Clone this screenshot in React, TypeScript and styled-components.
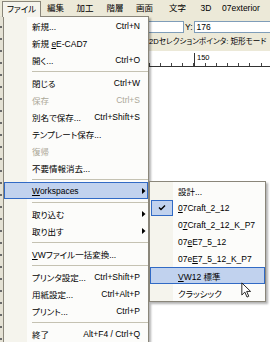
import React from 'react';
import styled, { createGlobalStyle, css } from 'styled-components';

const GlobalStyle = createGlobalStyle`
  html, body { margin: 0; padding: 0; background: #fff; }
  body {
    font-family: "Liberation Sans", "Noto Sans CJK JP", sans-serif;
    font-size: 8.5px;
    font-feature-settings: "palt";
    color: #000;
  }
`;

const Screen = styled.div`
  position: relative;
  width: 270px;
  height: 342px;
  overflow: hidden;
  background: #fff;
  display: flex;
  flex-direction: column;
`;

const MenuBar = styled.div`
  display: flex;
  flex-shrink: 0;
  height: 16px;
  padding-left: 2px;
  background: #ece9d8;
`;

const MenuTitle = styled.div<{ $w: number; $open?: boolean }>`
  box-sizing: border-box;
  width: ${p => p.$w}px;
  height: 16px;
  line-height: 16px;
  text-align: center;
  white-space: nowrap;
  ${p => p.$open && css`
    position: relative;
    z-index: 3;
    margin-top: 1px;
    line-height: 14px;
    background: #f5f4ed;
    border: 1px solid #8a867a;
    border-bottom: none;
  `}
`;

const Body = styled.div`
  display: flex;
  flex: 1;
  min-height: 0;
`;

const Dock = styled.div`
  width: 3px;
  background-color: #e4e1d4;
  background-image: repeating-linear-gradient(to bottom, transparent 0 10px, #6b6b6b 10px 12px);
  background-size: 2px 100%;
  background-repeat: no-repeat;
`;

const Work = styled.div`
  flex: 1;
  display: flex;
  flex-direction: column;
  min-width: 0;
`;

const Toolbar = styled.div`
  background: #ece9d8;
  padding-top: 4px;
`;

const CoordRow = styled.div`
  display: flex;
  align-items: center;
  height: 13px;
  padding-left: 131px;
`;

const Field = styled.div<{ $w?: number }>`
  box-sizing: border-box;
  height: 12px;
  ${p => (p.$w ? `width: ${p.$w}px;` : 'flex: 1;')}
  background: #fff;
  border: 1px solid #7f9db9;
  border-right: ${p => (p.$w ? '1px solid #7f9db9' : 'none')};
  padding-left: 2px;
  line-height: 10px;
`;

const FieldLabel = styled.span`
  margin: 0 1px;
`;

const ModeRow = styled.div`
  height: 18px;
  line-height: 18px;
  padding-left: 146px;
  font-size: 7.6px;
  white-space: nowrap;
`;

const Ruler = styled.div`
  display: flex;
  align-items: flex-end;
  height: 15px;
  border-bottom: 1px solid #333;
  background-image: repeating-linear-gradient(to right, #444 0 1px, transparent 1px 11.2px);
  background-size: 100% 3px;
  background-position: 0 100%;
  background-repeat: no-repeat;
`;

const RulerMark = styled.div`
  margin-left: 191px;
  height: 13px;
  border-left: 1px solid #333;
  padding-left: 2px;
  font-size: 7.5px;
  line-height: 9px;
`;

const Canvas = styled.div`
  flex: 1;
  background: #fff;
`;

const Menu = styled.div<{ $left: number; $top: number; $w: number; $z: number }>`
  position: absolute;
  left: ${p => p.$left}px;
  top: ${p => p.$top}px;
  width: ${p => p.$w}px;
  z-index: ${p => p.$z};
  box-sizing: border-box;
  border: 1px solid #8a867a;
  background: linear-gradient(to right, #f5f4ed 0 23px, #fcfcfa 23px);
  box-shadow: 2px 2px 2px rgba(0, 0, 0, 0.3);
`;

const Item = styled.div<{ $hot?: boolean; $off?: boolean }>`
  display: flex;
  align-items: center;
  height: 17px;
  padding-right: 8px;
  white-space: nowrap;
  color: ${p => (p.$off ? '#aca899' : '#000')};
  ${p => p.$hot && css`
    background: #c1d2ee;
    box-shadow: inset 0 0 0 1px #316ac5;
  `}
`;

const IconCell = styled.div`
  display: flex;
  align-items: center;
  justify-content: center;
  width: 23px;
  height: 17px;
  flex-shrink: 0;
`;

const CheckBox = styled.div`
  box-sizing: border-box;
  display: flex;
  align-items: center;
  justify-content: center;
  width: 22px;
  height: 16px;
  background: #c1d2ee;
  border: 1px solid #316ac5;
`;

const Label = styled.span`
  flex: 1;
  padding-left: 5px;
`;

const Shortcut = styled.span`
  padding-left: 3px;
`;

const Arrow = styled.svg`
  width: 4px;
  height: 6px;
  margin-right: -6px;
`;

const Separator = styled.div`
  display: flex;
  align-items: center;
  height: 6px;
  padding-left: 28px;
  &::after {
    content: '';
    flex: 1;
    height: 1px;
    background: #c5c2b2;
  }
`;

const Cursor = styled.svg`
  position: absolute;
  left: 241px;
  top: 282px;
  z-index: 5;
`;

type Entry =
  | 'sep'
  | { label: React.ReactNode; key?: string; off?: boolean; sub?: boolean; hot?: boolean };

const fileMenu: Entry[] = [
  { label: '新規...', key: 'Ctrl+N' },
  { label: <>新規 <u>e</u>E-CAD7</> },
  { label: '開く...', key: 'Ctrl+O' },
  'sep',
  { label: '閉じる', key: 'Ctrl+W' },
  { label: '保存', key: 'Ctrl+S', off: true },
  { label: '別名で保存...', key: 'Ctrl+Shift+S' },
  { label: 'テンプレート保存...' },
  { label: '復帰', off: true },
  { label: '不要情報消去...' },
  'sep',
  { label: <><u>W</u>orkspaces</>, sub: true, hot: true },
  'sep',
  { label: '取り込む', sub: true },
  { label: '取り出す', sub: true },
  'sep',
  { label: <><u>V</u>Wファイル一括変換...</> },
  'sep',
  { label: 'プリンタ設定...', key: 'Ctrl+Shift+P' },
  { label: '用紙設定...', key: 'Ctrl+Alt+P' },
  { label: 'プリント...', key: 'Ctrl+P' },
  'sep',
  { label: '終了', key: 'Alt+F4 / Ctrl+Q' },
];

const workspaces = [
  { label: '設計...' },
  { label: <><u>0</u>7Craft_2_12</>, checked: true },
  { label: <>0<u>7</u>Craft_2_12_K_P7</> },
  { label: <>07<u>e</u>E7_5_12</> },
  { label: <>07e<u>E</u>7_5_12_K_P7</> },
  { label: <><u>V</u>W12 標準</>, hot: true },
  { label: 'クラッシック' },
];

const titles = [
  { t: 'ファイル', w: 39, open: true },
  { t: '編集', w: 29 },
  { t: '加工', w: 30 },
  { t: '階層', w: 30 },
  { t: '画面', w: 29 },
  { t: '文字', w: 37 },
  { t: '3D', w: 20 },
  { t: '07exterior', w: 50 },
];

export default function App() {
  return (
    <Screen>
      <GlobalStyle />
      <MenuBar>
        {titles.map(m => (
          <MenuTitle key={m.t} $w={m.w} $open={m.open}>{m.t}</MenuTitle>
        ))}
      </MenuBar>
      <Body>
        <Dock />
        <Work>
          <Toolbar>
            <CoordRow>
              <Field $w={50} />
              <FieldLabel>Y:</FieldLabel>
              <Field>176</Field>
            </CoordRow>
            <ModeRow>2Dセレクションポインタ: 矩形モード</ModeRow>
          </Toolbar>
          <Ruler>
            <RulerMark>150</RulerMark>
          </Ruler>
          <Canvas />
        </Work>
      </Body>

      <Menu $left={3} $top={16} $w={146} $z={2}>
        {fileMenu.map((e, i) =>
          e === 'sep' ? (
            <Separator key={i} />
          ) : (
            <Item key={i} $hot={e.hot} $off={e.off}>
              <IconCell />
              <Label>{e.label}</Label>
              {e.key && <Shortcut>{e.key}</Shortcut>}
              {e.sub && (
                <Arrow viewBox="0 0 4 6">
                  <path d="M0 0 L3.5 3 L0 6 Z" fill="#000" />
                </Arrow>
              )}
            </Item>
          )
        )}
      </Menu>

      <Menu $left={149} $top={181} $w={117} $z={4}>
        {workspaces.map((w, i) => (
          <Item key={i} $hot={w.hot}>
            <IconCell>
              {w.checked && (
                <CheckBox>
                  <svg width="8" height="7" viewBox="0 0 8 7">
                    <path d="M1 3.5 L3 5.5 L7 1.5" stroke="#000" strokeWidth="1.4" fill="none" />
                  </svg>
                </CheckBox>
              )}
            </IconCell>
            <Label>{w.label}</Label>
          </Item>
        ))}
      </Menu>

      <Cursor width="10" height="16" viewBox="0 0 12 19">
        <path
          d="M1 1 L1 15.5 L4.6 12 L7.2 18 L9.3 17 L6.8 11.2 L11.5 11.2 Z"
          fill="#fff"
          stroke="#000"
          strokeWidth="1"
          strokeLinejoin="round"
        />
      </Cursor>
    </Screen>
  );
}
